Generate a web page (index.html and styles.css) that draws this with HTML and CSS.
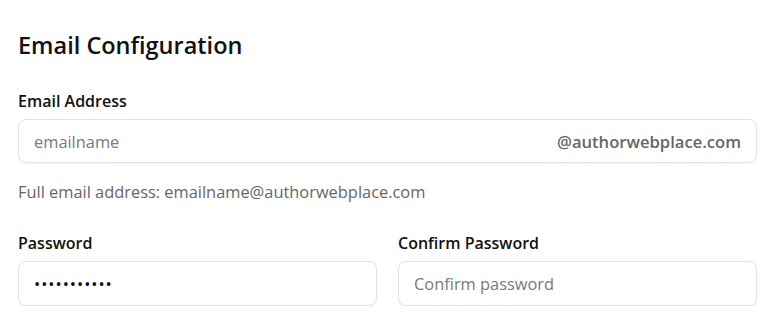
FILE: index.html
```html
<!DOCTYPE html>
<html>
<head>
<meta charset="utf-8">
<link rel="stylesheet" href="styles.css">
</head>
<body>
<div class="panel">
  <h2 class="title">Email Configuration</h2>
  <div class="field">
    <label class="label">Email Address</label>
    <div class="input-group">
      <input class="bare" type="text" placeholder="emailname">
      <span class="suffix">@authorwebplace.com</span>
    </div>
    <p class="help">Full email address: emailname@authorwebplace.com</p>
  </div>
  <div class="row">
    <div class="field">
      <label class="label">Password</label>
      <input class="input filled" type="password" value="password123">
    </div>
    <div class="field">
      <label class="label">Confirm Password</label>
      <input class="input" type="password" placeholder="Confirm password">
    </div>
  </div>
</div>
</body>
</html>
```
FILE: styles.css
```css
* { box-sizing: border-box; }
html, body { margin: 0; background: #fff; }
body {
  font-family: "Open Sans", "Noto Sans", sans-serif;
  color: #111;
}
.panel {
  width: 739px;
  margin-left: 18px;
  padding-top: 28px;
}
.title {
  margin: 0 0 28px;
  font-size: 23.5px;
  font-weight: 600;
  line-height: 34px;
}
.label {
  display: block;
  font-size: 16px;
  font-weight: 600;
  line-height: 22px;
  margin-bottom: 7px;
}
.input-group, .input {
  height: 44px;
  border: 1px solid #e3e3e3;
  border-radius: 8px;
  box-shadow: 0 1px 2px rgba(0,0,0,0.05);
  background: #fff;
}
.input-group {
  display: flex;
  align-items: center;
  padding: 0 15px;
}
.bare {
  flex: 1;
  border: 0;
  outline: 0;
  font: inherit;
  font-size: 16.4px;
  color: #111;
  padding: 0;
  background: transparent;
}
.bare::placeholder, .input::placeholder { color: #7a7a7a; }
.suffix {
  font-size: 16.6px;
  font-weight: 600;
  color: #666;
}
.help {
  margin: 17px 0 0;
  font-size: 16.4px;
  color: #666;
  line-height: 24px;
}
.row {
  display: grid;
  grid-template-columns: 1fr 1fr;
  gap: 21px;
  margin-top: 28px;
}
.input {
  display: block;
  width: 100%;
  height: 45px;
  padding: 0 15px;
  font: inherit;
  font-size: 16.4px;
  color: #111;
  outline: 0;
}
.filled { letter-spacing: 1px; }
```
